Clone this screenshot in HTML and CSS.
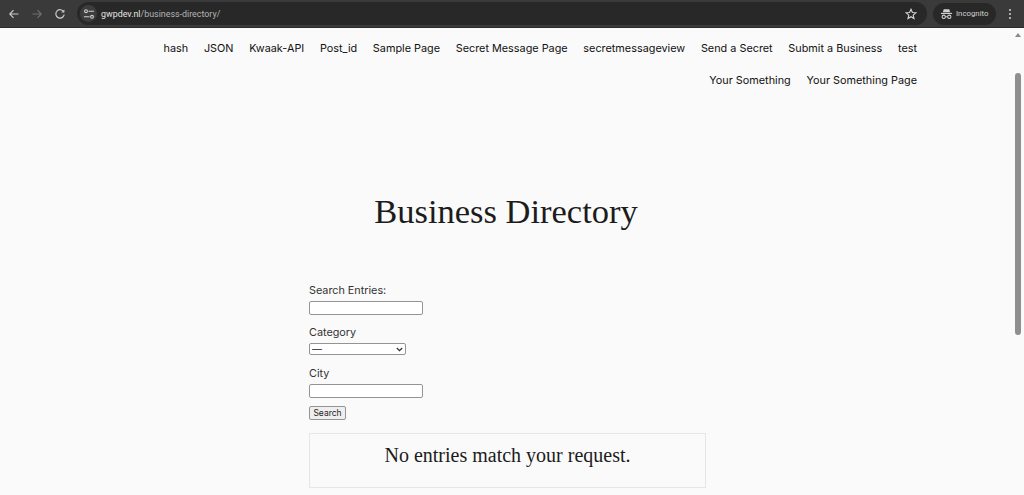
FILE: index.html
```html
<!DOCTYPE html>
<html lang="en">
<head>
<meta charset="utf-8">
<title>Business Directory</title>
<link rel="stylesheet" href="styles.css">
</head>
<body>
<header class="chrome">
  <svg class="tb back" width="12" height="12" viewBox="0 0 12 12"><path d="M10.5 6H2M5.5 2.2 1.8 6l3.7 3.8" fill="none" stroke="#c7c7c7" stroke-width="1.2"/></svg>
  <svg class="tb fwd" width="12" height="12" viewBox="0 0 12 12"><path d="M1.5 6H10M6.5 2.2 10.2 6l-3.7 3.8" fill="none" stroke="#6f6f6f" stroke-width="1.2"/></svg>
  <svg class="tb reload" width="12" height="12" viewBox="0 0 12 12"><path d="M9.8 4A4.2 4.2 0 1 0 10.2 6.5" fill="none" stroke="#c7c7c7" stroke-width="1.2"/><path d="M10.4 1.4v3.2H7.2z" fill="#c7c7c7"/></svg>
  <div class="omnibox">
    <span class="tune"><svg width="12" height="12" viewBox="0 0 12 12"><g fill="none" stroke="#d0d0d0" stroke-width="1.1"><circle cx="3" cy="3.2" r="1.4"/><path d="M5.5 3.2H11M1 8.8h5.5"/><circle cx="9" cy="8.8" r="1.4"/></g></svg></span>
    <span class="url"><b>gwpdev.nl</b>/business-directory/</span>
    <svg class="star" width="12" height="12" viewBox="0 0 12 12"><path d="M6 1.3 7.4 4.5l3.4.3-2.6 2.3.8 3.4L6 8.7 3 10.500l.8-3.400L1.200 4.800l3.400-.3z" fill="none" stroke="#d5d5d5" stroke-width="1.100"/></svg>
  </div>
  <div class="profile">
    <svg width="13" height="12" viewBox="0 0 14 12"><g fill="#d0d0d0"><path d="M4 1h6l1 3.200H3z"/><rect x="1" y="4.800" width="12" height="1.200"/></g><g fill="none" stroke="#d0d0d0" stroke-width="1.100"><circle cx="4" cy="9" r="1.800"/><circle cx="10" cy="9" r="1.800"/><path d="M5.800 9h2.400"/></g></svg>
    <span>Incognito</span>
  </div>
  <svg class="menu" width="4" height="12" viewBox="0 0 4 12"><g fill="#c7c7c7"><circle cx="2" cy="2" r="1.100"/><circle cx="2" cy="6" r="1.100"/><circle cx="2" cy="10" r="1.100"/></g></svg>
</header>
<div class="viewport">
  <main class="page">
    <nav class="nav">
      <a>hash</a><a>JSON</a><a>Kwaak-API</a><a>Post_id</a><a>Sample Page</a><a>Secret Message Page</a><a>secretmessageview</a><a>Send a Secret</a><a>Submit a Business</a><a>test</a><a>Your Something</a><a>Your Something Page</a>
    </nav>
    <h1 class="title">Business Directory</h1>
    <form class="form">
      <label class="label" for="s">Search Entries:</label>
      <input class="field" id="s" type="text">
      <label class="label" for="c">Category</label>
      <div class="pickwrap">
        <select class="pick" id="c"><option>—</option></select>
        <svg class="chev" width="7" height="5" viewBox="0 0 7 5"><path d="M.8 1 3.500 3.700 6.200 1" fill="none" stroke="#333" stroke-width="1.300"/></svg>
      </div>
      <label class="label" for="t">City</label>
      <input class="field" id="t" type="text">
      <button class="btn" type="button">Search</button>
    </form>
    <div class="notice">No entries match your request.</div>
  </main>
  <aside class="scrollbar">
    <span class="arrow"></span>
    <span class="thumb"></span>
  </aside>
</div>
</body>
</html>
```
FILE: styles.css
```css
html, body { margin: 0; height: 495px; overflow: hidden; background: #fafafa; }
body { font-family: "Inter", "Liberation Sans", sans-serif; color: #1f1f1f; }
.chrome {
  height: 28px; box-sizing: border-box; display: flex; align-items: center;
  background: #3a3a3a; border-bottom: 1px solid #2b2b2b; padding-left: 8px;
}
.tb { flex: none; }
.fwd { margin-left: 11px; }
.reload { margin-left: 11px; margin-right: 11px; }
.omnibox {
  flex: none; width: 850px; height: 23px; border-radius: 12px; background: #282828;
  display: flex; align-items: center; color: #d6d6d6;
}
.tune {
  width: 17px; height: 17px; margin-left: 3px; border-radius: 50%; background: #3d3d3d;
  display: flex; align-items: center; justify-content: center;
}
.url { margin-left: 4px; font: 8.900px "Roboto", sans-serif; color: #b5b5b5; flex: 1; }
.url b { font-weight: 400; color: #e3e3e3; }
.star { margin-right: 10px; }
.profile {
  flex: none; margin-left: 6px; width: 63px; height: 22px; border-radius: 11px; background: #282828;
  display: flex; align-items: center; gap: 3px; padding-left: 7px; box-sizing: border-box;
  font: 7.800px "Roboto", sans-serif; color: #d0d0d0;
}
.menu { margin-left: 12px; flex: none; }
.viewport { display: flex; height: 467px; }
.page { flex: 1; min-width: 0; overflow: hidden; }
.nav {
  width: 772px; margin-left: 145px; padding-top: 12px;
  display: flex; flex-wrap: wrap; justify-content: flex-end; column-gap: 15.700px; row-gap: 15px;
  font-size: 10.850px; line-height: 17px; color: #111;
}
.title {
  margin: 96px 0 0; width: 1012px; text-align: center;
  font: 400 34.500px/52px "Liberation Serif", serif; color: #1c1c1c;
}
.form { display: flex; flex-direction: column; align-items: flex-start; margin: 44px 0 0 309px; }
.label { font-size: 10.800px; line-height: 14px; color: #333; margin: 3px 0; }
.field {
  box-sizing: border-box; width: 114px; height: 14px; margin: 0 0 8px; padding: 0;
  background: #fff; border: 1px solid #949494; border-radius: 2px;
}
.pickwrap { position: relative; width: 97px; height: 12px; margin: 0 0 9px; }
.pick {
  display: block; appearance: none; box-sizing: border-box; width: 97px; height: 12px; margin: 0; padding: 0 0 0 2px;
  background: #fff; border: 1px solid #949494; border-radius: 2px;
  font: 10px/10px "Liberation Sans", sans-serif; color: #222;
}
.chev { position: absolute; right: 3px; top: 4px; }
.btn {
  box-sizing: border-box; width: 37px; height: 14px; padding: 0; margin: 0;
  background: #efefef; border: 1px solid #949494; border-radius: 2px;
  font: 8.500px "Inter", sans-serif; color: #222;
}
.notice {
  box-sizing: border-box; width: 397px; height: 55px; margin: 13px 0 0 309px; padding-top: 8px;
  border: 1px solid #e6e6e6; text-align: center;
  font: 20px/26px "Liberation Serif", serif; color: #1c1c1c;
}
.scrollbar { flex: none; width: 12px; position: relative; background: #fafafa; display: flex; flex-direction: column; align-items: center; }
.arrow { margin-top: 5px; width: 0; height: 0; border: 3px solid transparent; border-top: 0; border-bottom: 4px solid #8a8a8a; }
.thumb { margin-top: 36px; width: 6px; height: 262px; border-radius: 3px; background: #8f8f8f; }
```
